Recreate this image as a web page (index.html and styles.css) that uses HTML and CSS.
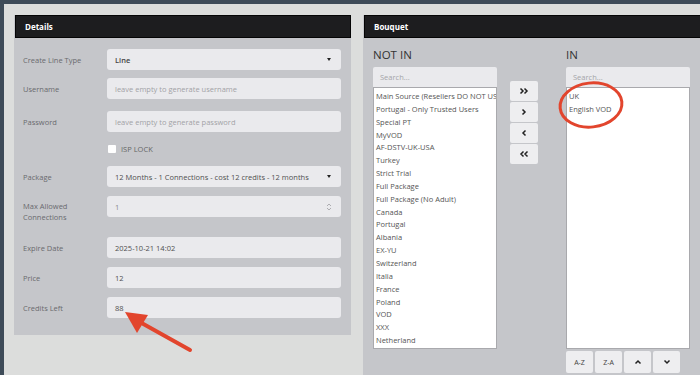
FILE: index.html
```html
<!DOCTYPE html>
<html lang="en">
<head>
    <meta charset="UTF-8">
    <meta name="viewport" content="width=device-width, initial-scale=1.0">
    <title>Add Line</title>
    <link rel="stylesheet" href="styles.css">
</head>
<body>
    <div class="page">
        <div class="card card-details">
            <div class="card-head"><strong>Details</strong></div>
            <div class="card-body">
                <div class="row row-first">
                    <label>Create Line Type</label>
                    <div class="field select"><span class="val strong">Line</span><span class="caret"></span></div>
                </div>
                <div class="row row-wide">
                    <label>Username</label>
                    <div class="field"><span class="ph">leave empty to generate username</span></div>
                </div>
                <div class="row">
                    <label>Password</label>
                    <div class="field"><span class="ph">leave empty to generate password</span></div>
                </div>
                <div class="row row-check">
                    <span></span>
                    <div class="check"><span class="box"></span>ISP LOCK</div>
                </div>
                <div class="row">
                    <label>Package</label>
                    <div class="field select"><span class="val">12 Months - 1 Connections - cost 12 credits - 12 months</span><span class="caret"></span></div>
                </div>
                <div class="row row-tall">
                    <label>Max Allowed<br>Connections</label>
                    <div class="field number"><span class="val light">1</span>
                        <svg class="spin" width="6" height="10" viewBox="0 0 6 10"><path d="M1 4 L3 2 L5 4 M1 6 L3 8 L5 6" fill="none" stroke="#a6a6aa" stroke-width="0.9"/></svg>
                    </div>
                </div>
                <div class="row">
                    <label>Expire Date</label>
                    <div class="field"><span class="val">2025-10-21 14:02</span></div>
                </div>
                <div class="row">
                    <label>Price</label>
                    <div class="field"><span class="val">12</span></div>
                </div>
                <div class="row">
                    <label>Credits Left</label>
                    <div class="field"><span class="val">88</span></div>
                </div>
            </div>
        </div>

        <div class="card card-bouquet">
            <div class="card-head"><strong>Bouquet</strong></div>
            <div class="card-body bouquet">
                <div class="pick">
                    <h3>NOT IN</h3>
                    <div class="search">Search...</div>
                    <ul class="list">
                        <li>Main Source (Resellers DO NOT USE)</li>
                        <li>Portugal - Only Trusted Users</li>
                        <li>Special PT</li>
                        <li>MyVOD</li>
                        <li>AF-DSTV-UK-USA</li>
                        <li>Turkey</li>
                        <li>Strict Trial</li>
                        <li>Full Package</li>
                        <li>Full Package (No Adult)</li>
                        <li>Canada</li>
                        <li>Portugal</li>
                        <li>Albania</li>
                        <li>EX-YU</li>
                        <li>Switzerland</li>
                        <li>Italia</li>
                        <li>France</li>
                        <li>Poland</li>
                        <li>VOD</li>
                        <li>XXX</li>
                        <li>Netherland</li>
                    </ul>
                </div>
                <div class="moves">
                    <button><svg width="10" height="8" viewBox="0 0 10 8"><path d="M1.5 1.5 L4 4 L1.5 6.5 M5.5 1.5 L8 4 L5.5 6.5" fill="none" stroke="#222" stroke-width="1.5"/></svg></button>
                    <button><svg width="10" height="8" viewBox="0 0 10 8"><path d="M3.5 1.5 L6 4 L3.5 6.5" fill="none" stroke="#222" stroke-width="1.5"/></svg></button>
                    <button><svg width="10" height="8" viewBox="0 0 10 8"><path d="M6.5 1.5 L4 4 L6.5 6.5" fill="none" stroke="#222" stroke-width="1.5"/></svg></button>
                    <button><svg width="10" height="8" viewBox="0 0 10 8"><path d="M4.5 1.5 L2 4 L4.5 6.5 M8.5 1.5 L6 4 L8.5 6.5" fill="none" stroke="#222" stroke-width="1.5"/></svg></button>
                </div>
                <div class="pick pick-in">
                    <h3>IN</h3>
                    <div class="search">Search...</div>
                    <ul class="list">
                        <li>UK</li>
                        <li>English VOD</li>
                    </ul>
                    <div class="sorts">
                        <button>A-Z</button>
                        <button>Z-A</button>
                        <button><svg width="8" height="6" viewBox="0 0 8 6"><path d="M1.5 4.5 L4 2 L6.5 4.5" fill="none" stroke="#222" stroke-width="1.5"/></svg></button>
                        <button><svg width="8" height="6" viewBox="0 0 8 6"><path d="M1.5 1.5 L4 4 L6.5 1.5" fill="none" stroke="#222" stroke-width="1.5"/></svg></button>
                    </div>
                </div>
            </div>
        </div>
    </div>

    <svg class="marks" width="700" height="375" viewBox="0 0 700 375">
        <ellipse cx="591" cy="105" rx="31" ry="22" transform="rotate(-6 591 105)" fill="none" stroke="#e2452d" stroke-width="3"/>
        <line x1="190" y1="350" x2="138" y2="321" stroke="#e2452d" stroke-width="4" stroke-linecap="round"/>
        <polygon points="125,312 148,315 137,333" fill="#e2452d"/>
    </svg>
</body>
</html>
```

FILE: styles.css
```css
body { margin: 0; height: 375px; overflow: hidden; background: #dcdddc; border-top: 4px solid #3e4b58; border-left: 4px solid #3e4b58; box-sizing: border-box; font-family: "Open Sans", Arial, sans-serif; font-size: 7.5px; color: #555; position: relative; }
.page { display: flex; gap: 12px; padding: 11px 0 0 10px; }
.card { flex-shrink: 0; background: #c5c6ca; }
.card-details { width: 337px; height: 320px; }
.card-bouquet { width: 345px; height: 360px; }
.card-head { height: 23px; background: #1d1d1f; border: 1px solid #050505; box-sizing: border-box; color: #fff; font-size: 8px; display: flex; align-items: center; padding-left: 9px; margin-left: 1px; }
.card-body { padding: 11px 10px 0 9px; }

.row { display: grid; grid-template-columns: 84px 1fr; align-items: center; min-height: 21px; margin-bottom: 9px; }
.row-first { margin-bottom: 8px; }
.row-wide { margin-bottom: 12px; }
.row-check { min-height: 16px; margin-bottom: 9px; }
.row-tall { align-items: start; height: 32px; }
.row-tall label { padding-top: 5px; line-height: 11px; }
.row label { color: #6a6a6e; font-size: 7.5px; }
.field { height: 21px; background: #eaeaed; border-radius: 3px; display: flex; align-items: center; padding: 0 8px; box-sizing: border-box; }
.field .val { color: #505050; flex: 1; white-space: nowrap; }
.field .val.strong { font-weight: 600; color: #444; }
.field .val.light { color: #8a8a8e; }
.field .ph { color: #a2a2a6; }
.caret { width: 0; height: 0; border-left: 2.5px solid transparent; border-right: 2.5px solid transparent; border-top: 3px solid #222; margin-right: 2px; }
.spin { margin-right: 1px; }
.check { display: flex; align-items: center; gap: 5px; color: #666; padding-left: 1px; }
.check .box { width: 8px; height: 8px; background: #fff; border-radius: 1px; }

.bouquet { display: flex; padding: 8px 0 0 10px; }
.pick { width: 124px; }
.pick-in { margin-left: 28px; }
.pick h3 { margin: 0 0 4px; height: 17px; font-size: 11.5px; font-weight: 400; color: #333; line-height: 18px; }
.search { height: 20px; background: #eaeaed; border-radius: 2px 2px 0 0; color: #a5a5a9; padding-left: 7px; line-height: 20px; }
.list { list-style: none; margin: 0; padding: 2px 0 0 2px; height: 262px; box-sizing: border-box; background: #fff; border: 1px solid #a9a9ad; overflow: hidden; }
.list li { line-height: 12.85px; white-space: nowrap; color: #555; }
.moves { display: flex; flex-direction: column; gap: 1px; margin: 35px 0 0 13px; width: 28px; }
.moves button, .sorts button { border: none; background: #eeeef0; border-radius: 2px; padding: 0; display: flex; align-items: center; justify-content: center; font-family: inherit; }
.moves button { height: 20px; }
.sorts { display: flex; gap: 2px; margin-top: 2px; }
.sorts button { width: 27px; height: 22px; font-size: 7px; color: #444; }
.marks { position: absolute; top: -4px; left: -4px; pointer-events: none; }
```
